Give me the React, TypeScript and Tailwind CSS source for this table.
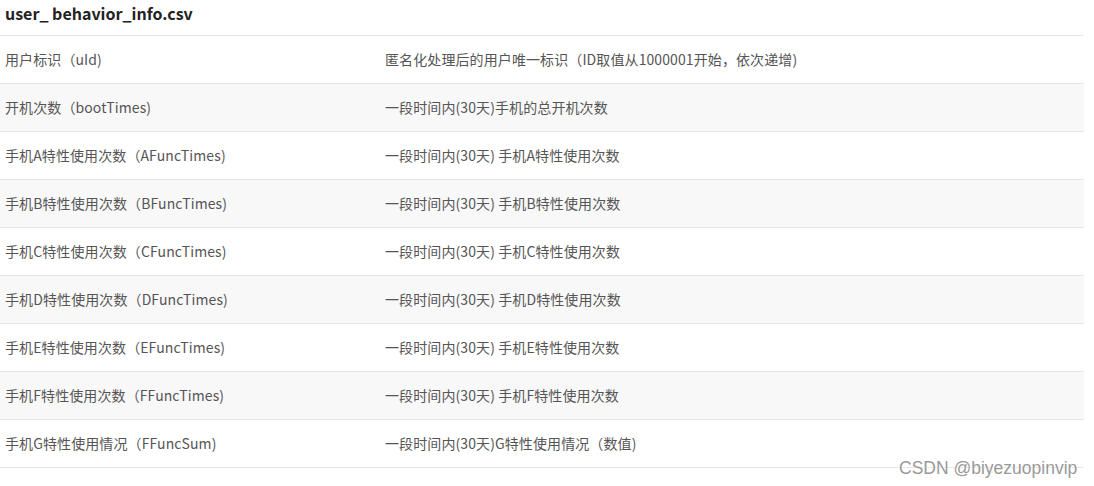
const rows: [string, string][] = [
  ['用户标识（uId)', '匿名化处理后的用户唯一标识（ID取值从1000001开始，依次递增)'],
  ['开机次数（bootTimes)', '一段时间内(30天)手机的总开机次数'],
  ['手机A特性使用次数（AFuncTimes)', '一段时间内(30天) 手机A特性使用次数'],
  ['手机B特性使用次数（BFuncTimes)', '一段时间内(30天) 手机B特性使用次数'],
  ['手机C特性使用次数（CFuncTimes)', '一段时间内(30天) 手机C特性使用次数'],
  ['手机D特性使用次数（DFuncTimes)', '一段时间内(30天) 手机D特性使用次数'],
  ['手机E特性使用次数（EFuncTimes)', '一段时间内(30天) 手机E特性使用次数'],
  ['手机F特性使用次数（FFuncTimes)', '一段时间内(30天) 手机F特性使用次数'],
  ['手机G特性使用情况（FFuncSum)', '一段时间内(30天)G特性使用情况（数值)'],
];

export default function App() {
  return (
    <div className="relative h-[486px] w-[1094px] bg-white font-['Noto_Sans_CJK_SC',sans-serif] text-[14px] text-[#555]">
      <div className="w-[1084px]">
        <div className="flex h-[35px] items-center px-[5px] pb-[10px] text-[16px] font-bold text-[#222]">
          user_ behavior_info.csv
        </div>
        <div className="border-t border-[#e6e6e6]">
          {rows.map(([name, desc], i) => (
            <div
              key={name}
              className={`grid h-[48px] grid-cols-[380px_1fr] items-center border-b border-[#e6e6e6] tracking-[0.1px] ${
                i % 2 === 1 ? 'bg-[#f8f8f8]' : 'bg-white'
              }`}
            >
              <div className="px-[5px]">{name}</div>
              <div className="px-[5px]">{desc}</div>
            </div>
          ))}
        </div>
      </div>
      <div className="absolute left-[899px] top-[455px] font-['Liberation_Sans',sans-serif] text-[17.5px] text-[#999] [text-shadow:0_0_2px_#fff,0_0_2px_#fff]">
        CSDN @biyezuopinvip
      </div>
    </div>
  );
}
